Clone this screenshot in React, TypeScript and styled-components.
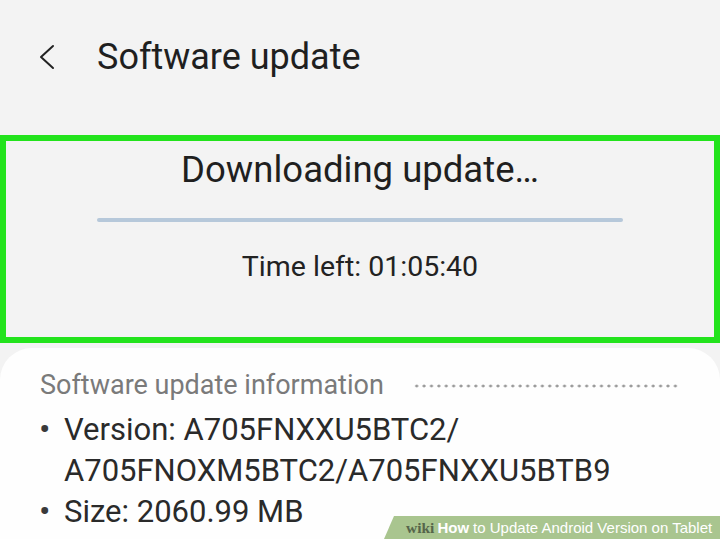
import React from "react";
import styled, { createGlobalStyle } from "styled-components";

const Global = createGlobalStyle`
  html, body { margin: 0; padding: 0; background: #f3f3f3; }
  * { box-sizing: border-box; }
`;

const Page = styled.div`
  position: relative;
  width: 720px;
  height: 539px;
  overflow: hidden;
  background: #f3f3f3;
  font-family: Roboto, "Noto Sans", sans-serif;
  color: #1c1c1c;
  display: flex;
  flex-direction: column;
`;

const Header = styled.div`
  height: 135px;
  display: flex;
  align-items: center;
  padding: 0 0 21px 38px;
`;

const Back = styled.svg`
  width: 18px;
  height: 26px;
  flex: none;
`;

const Title = styled.h1`
  margin: 0 0 0 41px;
  font-size: 36px;
  font-weight: 400;
  color: #1f1f1f;
`;

const StatusBox = styled.section`
  height: 208px;
  border: 6px solid #22e31c;
  background: #f3f3f3;
  display: flex;
  flex-direction: column;
  align-items: center;
  padding-top: 6px;
`;

const StatusTitle = styled.div`
  font-size: 36.5px;
  line-height: 46px;
  color: #1f1f1f;
`;

const Progress = styled.div`
  width: 526px;
  height: 4px;
  margin-top: 25px;
  border-radius: 2px;
  background: #b6c8da;
`;

const TimeLeft = styled.div`
  margin-top: 28px;
  font-size: 28.5px;
  line-height: 34px;
  color: #222;
`;

const InfoCard = styled.section`
  flex: 1;
  margin-top: 5px;
  background: #fefefe;
  border-radius: 32px 32px 0 0;
  padding: 21px 40px 0 40px;
`;

const SectionRow = styled.div`
  display: flex;
  align-items: center;
  gap: 30px;
`;

const SectionLabel = styled.div`
  font-size: 27px;
  line-height: 32px;
  color: #7a7a7a;
  white-space: nowrap;
  width: 343px;
`;

const Dots = styled.div`
  width: 266px;
  height: 4px;
  margin-top: 2px;
  background-image: radial-gradient(circle, #9a9a9a 1.3px, transparent 1.7px);
  background-size: 7.4px 4px;
`;

const List = styled.ul`
  list-style: none;
  margin: 8px 0 0 0;
  padding: 0;
`;

const Item = styled.li`
  position: relative;
  padding-left: 24px;
  font-size: 31px;
  line-height: 41px;
  color: #2a2a2a;
  white-space: nowrap;
  &::before {
    content: "•";
    position: absolute;
    left: -1px;
    font-size: 34px;
    color: #3a3a3a;
  }
`;

const Badge = styled.div`
  position: absolute;
  right: 0;
  bottom: 0;
  width: 336px;
  height: 23px;
  background: #a9c58f;
  clip-path: polygon(10px 0, 100% 0, 100% 100%, 0 100%);
  display: flex;
  align-items: center;
  padding-left: 22px;
  font-family: "Liberation Sans", Arial, sans-serif;
  font-size: 15px;
  font-weight: 700;
  color: #ffffff;
  white-space: nowrap;
`;

const Wiki = styled.span`
  font-family: "Liberation Serif", serif;
  color: #56654b;
  font-size: 15.5px;
  margin-right: 3px;
`;

const Rest = styled.span`
  font-weight: 400;
  margin-left: 4px;
`;

export default function App() {
  return (
    <Page>
      <Global />
      <Header>
        <Back viewBox="0 0 18 26">
          <path d="M15 2 L3 13 L15 24" fill="none" stroke="#222" strokeWidth="2" strokeLinecap="round" strokeLinejoin="round" />
        </Back>
        <Title>Software update</Title>
      </Header>
      <StatusBox>
        <StatusTitle>Downloading update…</StatusTitle>
        <Progress />
        <TimeLeft>Time left: 01:05:40</TimeLeft>
      </StatusBox>
      <InfoCard>
        <SectionRow>
          <SectionLabel>Software update information</SectionLabel>
          <Dots />
        </SectionRow>
        <List>
          <Item>
            Version: A705FNXXU5BTC2/
            <br />
            A705FNOXM5BTC2/A705FNXXU5BTB9
          </Item>
          <Item>Size: 2060.99 MB</Item>
        </List>
      </InfoCard>
      <Badge>
        <Wiki>wiki</Wiki>How<Rest>to Update Android Version on Tablet</Rest>
      </Badge>
    </Page>
  );
}
